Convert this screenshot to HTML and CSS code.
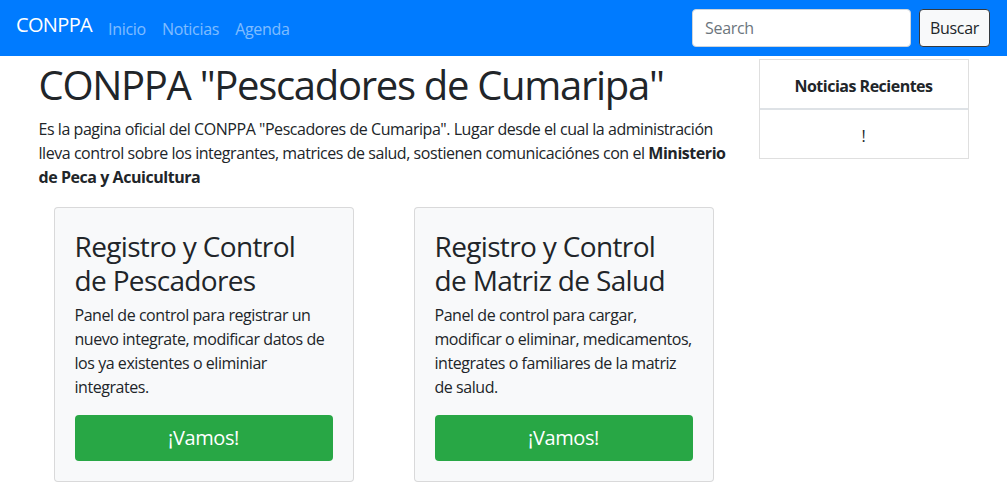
FILE: index.html
```html
<!DOCTYPE html>
<html lang="es">
<head>
<meta charset="utf-8">
<title>CONPPA</title>
<link rel="stylesheet" href="styles.css">
</head>
<body>
<nav class="navbar">
  <a class="brand" href="#">CONPPA</a>
  <ul class="nav-links">
    <li><a href="#">Inicio</a></li>
    <li><a href="#">Noticias</a></li>
    <li><a href="#">Agenda</a></li>
  </ul>
  <form class="search">
    <input class="search-input" type="search" placeholder="Search">
    <button class="search-btn" type="button">Buscar</button>
  </form>
</nav>
<div class="container">
  <main class="main-col">
    <h1 class="title">CONPPA "Pescadores de Cumaripa"</h1>
    <p class="lead-text">Es la pagina oficial del CONPPA "Pescadores de Cumaripa". Lugar desde el cual la administración lleva control sobre los integrantes, matrices de salud, sostienen comunicaciónes con el <b>Ministerio</b> <b>de Peca y Acuicultura</b></p>
    <div class="cards">
      <div class="card-col">
        <div class="card">
          <h3 class="card-title">Registro y Control de Pescadores</h3>
          <p class="card-text">Panel de control para registrar un nuevo integrate, modificar datos de los ya existentes o eliminiar integrates.</p>
          <a class="btn-go" href="#">¡Vamos!</a>
        </div>
      </div>
      <div class="card-col">
        <div class="card">
          <h3 class="card-title">Registro y Control de Matriz de Salud</h3>
          <p class="card-text">Panel de control para cargar, modificar o eliminar, medicamentos, integrates o familiares de la matriz de salud.</p>
          <a class="btn-go" href="#">¡Vamos!</a>
        </div>
      </div>
    </div>
  </main>
  <aside class="side-col">
    <ul class="news">
      <li class="news-head">Noticias Recientes</li>
      <li class="news-item">!</li>
    </ul>
  </aside>
</div>
</body>
</html>
```
FILE: styles.css
```css
* { box-sizing: border-box; }
html, body { margin: 0; }
body {
  font-family: "Open Sans", "Noto Sans", sans-serif;
  font-size: 16px;
  line-height: 1.5;
  letter-spacing: -0.3px;
  color: #212529;
  background: #fff;
}
.navbar {
  height: 56px;
  background: #007bff;
  display: flex;
  align-items: center;
  padding: 0 17px 0 16px;
}
.brand {
  color: #fff;
  text-decoration: none;
  font-size: 20px;
  line-height: 30px;
  letter-spacing: -0.65px;
  margin-right: 16px;
  margin-top: -6px;
}
.nav-links {
  list-style: none;
  margin: 0;
  padding: 2px 0 0;
  display: flex;
  gap: 16px;
  flex: 1;
}
.nav-links a {
  color: rgba(255,255,255,.5);
  text-decoration: none;
  font-size: 16px;
  line-height: 24px;
}
.search {
  display: flex;
  align-items: center;
  gap: 8px;
}
.search-input {
  width: 219px;
  height: 38px;
  padding: 6px 12px;
  font: inherit;
  font-size: 16px;
  letter-spacing: -0.3px;
  color: #495057;
  background: #fff;
  border: 1px solid #ced4da;
  border-radius: 4px;
}
.search-input::placeholder { color: #6c757d; }
.search-btn {
  width: 71px;
  height: 38px;
  font: inherit;
  font-size: 16px;
  letter-spacing: -0.3px;
  color: #212529;
  background: #f8f9fa;
  border: 1px solid #343a40;
  border-radius: 4px;
  padding: 0;
}
.container {
  width: 960px;
  margin: 0 auto;
  display: flex;
}
.main-col {
  width: 720px;
  padding: 0 15px;
}
.side-col {
  width: 240px;
  padding: 3px 15px 0;
}
.title {
  font-size: 40px;
  font-weight: 400;
  line-height: 48px;
  letter-spacing: -1.3px;
  margin: 5px 0 8px;
}
.lead-text {
  margin: 0 0 18px;
  letter-spacing: -0.45px;
}
.cards {
  display: flex;
  margin: 0 -15px;
}
.card-col {
  width: 360px;
  padding: 0 15px;
}
.card {
  width: 300px;
  margin: 0 auto;
  background: #f8f9fa;
  border: 1px solid rgba(0,0,0,.125);
  border-radius: 4px;
  padding: 22px 20px 20px;
}
.card-title {
  font-size: 28px;
  font-weight: 400;
  line-height: 33.6px;
  letter-spacing: -0.65px;
  margin: 0 0 6px;
}
.card-text {
  margin: 0 0 16px;
  letter-spacing: -0.45px;
}
.btn-go {
  display: block;
  height: 46px;
  line-height: 46px;
  text-align: center;
  font-size: 20px;
  letter-spacing: -0.4px;
  color: #fff;
  background: #28a745;
  border-radius: 4px;
  text-decoration: none;
}
.news {
  list-style: none;
  margin: 0;
  padding: 0;
  border: 1px solid rgba(0,0,0,.125);
  text-align: center;
}
.news li {
  padding: 14px 20px 10px;
  line-height: 24px;
}
.news-head {
  font-weight: 700;
  letter-spacing: -0.5px;
  border-bottom: 2px solid #dee2e6;
}
```
